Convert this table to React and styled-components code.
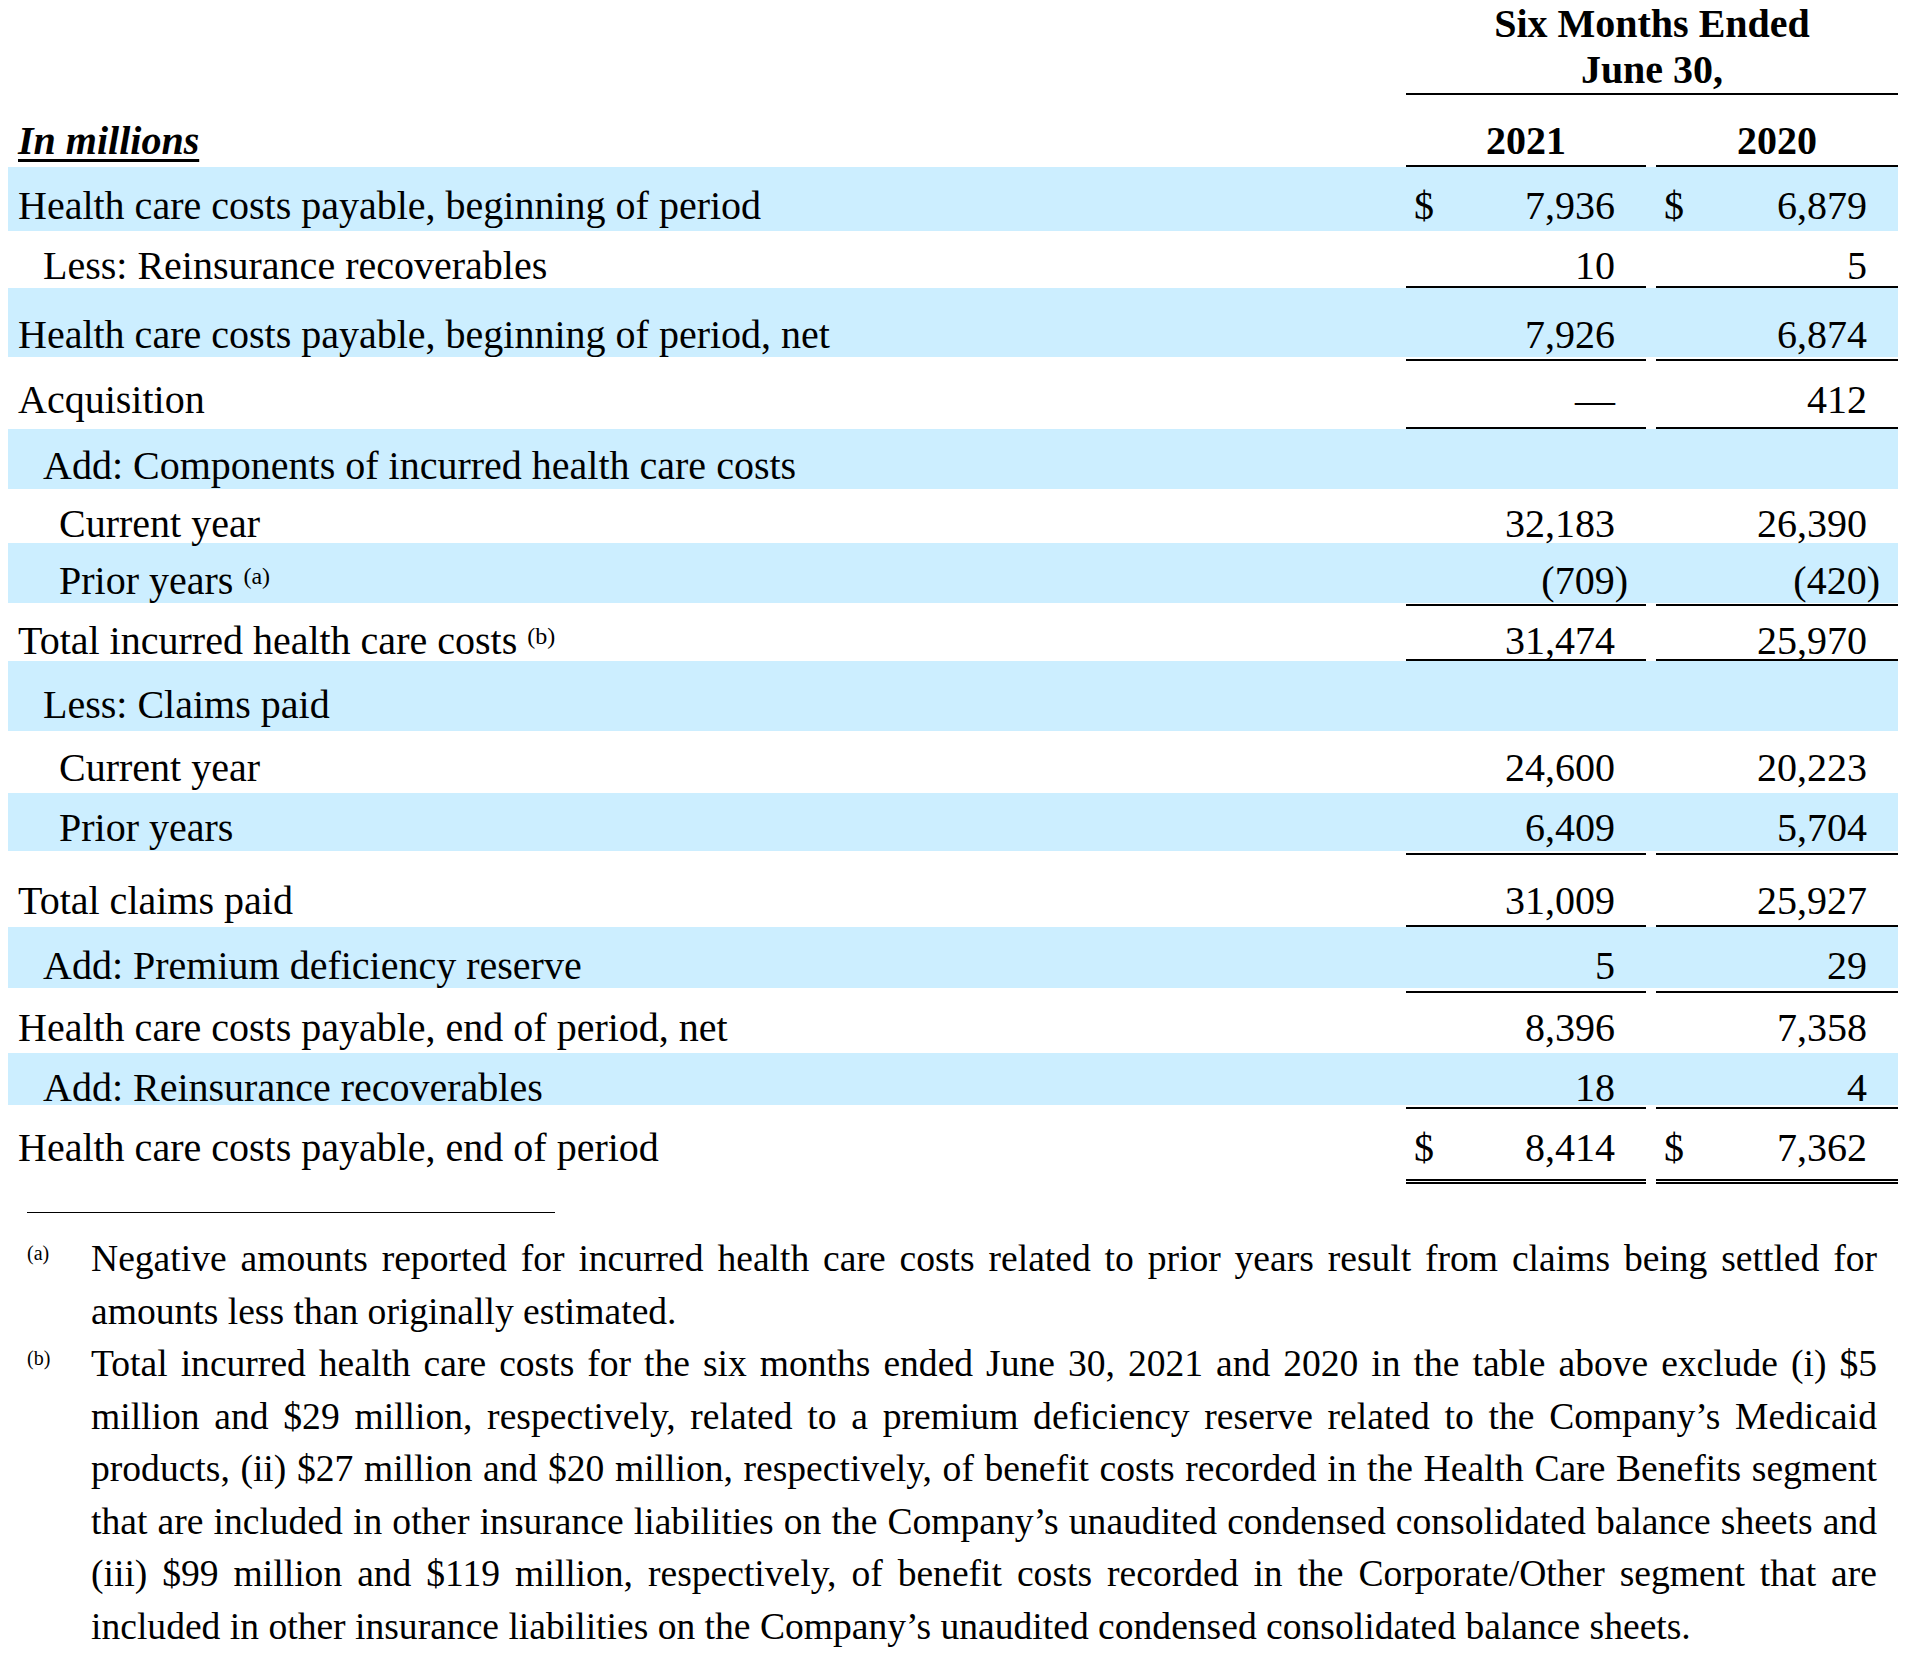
import styled, { createGlobalStyle } from "styled-components"

const GlobalStyle = createGlobalStyle`
  body {
    margin: 0 8px;
    background: #fff;
    color: #000;
    font-family: "Liberation Serif", "Times New Roman", serif;
  }
`

const COLS = "1398px 240px 10px 242px"

const rows = [
  { label: "Health care costs payable, beginning of period", h: 64, pt: 16, a: "7,936", b: "6,879", dollar: true },
  { label: "Less: Reinsurance recoverables", indent: 1, h: 55, pt: 11.5, a: "10", b: "5", rule: 2 },
  { label: "Health care costs payable, beginning of period, net", h: 69, pt: 23.5, a: "7,926", b: "6,874", rule: 4 },
  { label: "Acquisition", h: 66, pt: 15.5, a: "—", b: "412", rule: 2 },
  { label: "Add: Components of incurred health care costs", indent: 1, h: 60, pt: 13.5 },
  { label: "Current year", indent: 2, h: 54, pt: 12, a: "32,183", b: "26,390" },
  { label: "Prior years", indent: 2, h: 60, pt: 14.5, a: "(709)", b: "(420)", note: "(a)", rule: 3 },
  { label: "Total incurred health care costs", h: 53, pt: 11.5, a: "31,474", b: "25,970", note: "(b)", rule: 2 },
  { label: "Less: Claims paid", indent: 1, h: 70, pt: 21 },
  { label: "Current year", indent: 2, h: 62, pt: 14, a: "24,600", b: "20,223" },
  { label: "Prior years", indent: 2, h: 58, pt: 11.5, a: "6,409", b: "5,704", rule: 4 },
  { label: "Total claims paid", h: 70, pt: 22.5, a: "31,009", b: "25,927", rule: 2 },
  { label: "Add: Premium deficiency reserve", indent: 1, h: 61, pt: 15.5, a: "5", b: "29", rule: 5 },
  { label: "Health care costs payable, end of period, net", h: 60, pt: 12, a: "8,396", b: "7,358" },
  { label: "Add: Reinsurance recoverables", indent: 1, h: 52, pt: 11.5, a: "18", b: "4", rule: 4 },
  { label: "Health care costs payable, end of period", h: 70, pt: 16, a: "8,414", b: "7,362", dollar: true, rule: 5, double: true },
]

const notes = [
  {
    mark: "(a)",
    lines: [
      "Negative amounts reported for incurred health care costs related to prior years result from claims being settled for",
      "amounts less than originally estimated.",
    ],
  },
  {
    mark: "(b)",
    lines: [
      "Total incurred health care costs for the six months ended June 30, 2021 and 2020 in the table above exclude (i) $5",
      "million and $29 million, respectively, related to a premium deficiency reserve related to the Company’s Medicaid",
      "products, (ii) $27 million and $20 million, respectively, of benefit costs recorded in the Health Care Benefits segment",
      "that are included in other insurance liabilities on the Company’s unaudited condensed consolidated balance sheets and",
      "(iii) $99 million and $119 million, respectively, of benefit costs recorded in the Corporate/Other segment that are",
      "included in other insurance liabilities on the Company’s unaudited condensed consolidated balance sheets.",
    ],
  },
]

function Amount({ value, dollar }) {
  const neg = value && value.startsWith("(")
  return (
    <AmountCell>
      <span>{dollar ? "$" : ""}</span>
      <span>
        {neg ? value.slice(0, -1) : value}
        {neg && <Hang>)</Hang>}
      </span>
    </AmountCell>
  )
}

function App() {
  return (
    <Page>
      <GlobalStyle />
      <PeriodRow>
        <PeriodTitle>
          Six Months Ended
          <br />
          June 30,
        </PeriodTitle>
      </PeriodRow>
      <YearRow>
        <Units>In millions</Units>
        <Year $col={2}>2021</Year>
        <Year $col={4}>2020</Year>
      </YearRow>

      {rows.map((r, i) => (
        <div key={i}>
          <Row $shade={i % 2 === 0} $h={r.h} $pt={r.pt}>
            <Label $indent={r.indent || 0}>
              {r.label}
              {r.note && (
                <>
                  {" "}
                  <Sup>{r.note}</Sup>
                </>
              )}
            </Label>
            <Amount value={r.a} dollar={r.dollar} />
            <span />
            <Amount value={r.b} dollar={r.dollar} />
          </Row>
          {r.rule && (
            <Rule $h={r.rule}>
              <RuleSeg $col={2} $double={r.double} />
              <RuleSeg $col={4} $double={r.double} />
            </Rule>
          )}
        </div>
      ))}

      <Separator />
      <Notes>
        {notes.map((n) => (
          <Note key={n.mark}>
            <Mark>{n.mark}</Mark>
            <div>
              {n.lines.map((line, j) => (
                <NoteLine key={j} $last={j === n.lines.length - 1}>
                  {line}
                </NoteLine>
              ))}
            </div>
          </Note>
        ))}
      </Notes>
    </Page>
  )
}

export default App

const Page = styled.div`
  width: 1890px;
  padding-bottom: 10px;
`

const PeriodRow = styled.div`
  display: grid;
  grid-template-columns: ${COLS};
  font-size: 40px;
  line-height: 46px;
  font-weight: bold;
`

const PeriodTitle = styled.div`
  grid-column: 2 / 5;
  text-align: center;
  padding-top: 1px;
  border-bottom: 2px solid #000;
`

const YearRow = styled.div`
  display: grid;
  grid-template-columns: ${COLS};
  height: 72px;
  font-size: 40px;
  line-height: 46px;
  font-weight: bold;
`

const Units = styled.div`
  grid-column: 1;
  padding: 23px 0 0 10px;
  font-style: italic;
  text-decoration: underline;
  text-decoration-thickness: 3px;
  text-underline-offset: 5px;
`

const Year = styled.div`
  grid-column: ${(p) => p.$col};
  box-sizing: border-box;
  padding-top: 23px;
  text-align: center;
  border-bottom: 2px solid #000;
`

const Row = styled.div`
  display: grid;
  grid-template-columns: ${COLS};
  height: ${(p) => p.$h}px;
  background: ${(p) => (p.$shade ? "#cceeff" : "transparent")};
  font-size: 40px;
  line-height: 46px;

  & > * {
    padding-top: ${(p) => p.$pt}px;
  }
`

const Label = styled.div`
  padding-left: ${(p) => [10, 35, 51][p.$indent]}px;
  white-space: nowrap;
`

const Sup = styled.span`
  font-size: 24px;
  line-height: 0;
  vertical-align: 10px;
`

const AmountCell = styled.div`
  display: flex;
  justify-content: space-between;
  padding-left: 8px;
  padding-right: 31px;
  white-space: nowrap;
`

const Hang = styled.span`
  margin-right: -13px;
`

const Rule = styled.div`
  display: grid;
  grid-template-columns: ${COLS};
  height: ${(p) => p.$h}px;
`

const RuleSeg = styled.div`
  grid-column: ${(p) => p.$col};
  align-self: end;
  border-bottom: ${(p) => (p.$double ? "5px double #000" : "2px solid #000")};
`

const Separator = styled.div`
  width: 528px;
  margin: 28px 0 20px 19px;
  border-top: 1px solid #000;
`

const Notes = styled.div`
  margin: 0 21px 0 19px;
  font-size: 37.6px;
  line-height: 52.5px;
`

const Note = styled.div`
  display: grid;
  grid-template-columns: 64px 1fr;
`

const Mark = styled.div`
  font-size: 20px;
  line-height: 40px;
`

const NoteLine = styled.div`
  white-space: nowrap;
  text-align: ${(p) => (p.$last ? "left" : "justify")};
  text-align-last: ${(p) => (p.$last ? "left" : "justify")};
`
